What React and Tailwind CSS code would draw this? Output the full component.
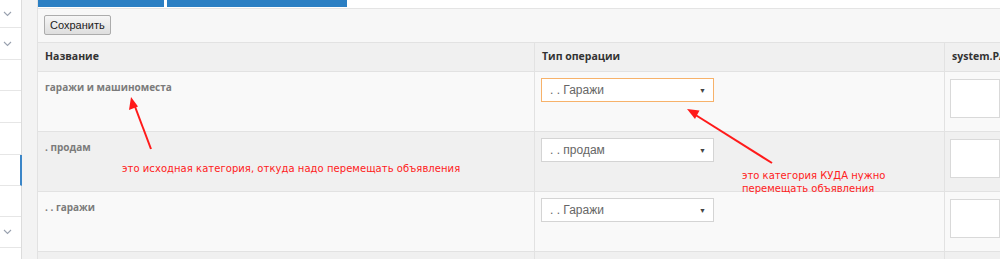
import React from 'react';

const Chevron = () => (
    <svg width="9" height="6" viewBox="0 0 9 6" className="text-gray-400">
        <path d="M1 1l3.5 3.5L8 1" fill="none" stroke="currentColor" strokeWidth="1.1" />
    </svg>
);

const sideItems = [
    { h: 'h-[28px]', chevron: true },
    { h: 'h-[32px]', chevron: true },
    { h: 'h-[31px]' },
    { h: 'h-[32px]' },
    { h: 'h-[32px]' },
    { h: 'h-[31px]', active: true },
    { h: 'h-[31px]' },
    { h: 'h-[31px]', chevron: true },
    { h: 'h-[31px]' },
];

const rows = [
    { name: 'гаражи и машиноместа', value: '. . Гаражи', focused: true, bg: 'bg-[#f9f9f9]' },
    { name: '. продам', value: '. . продам', bg: 'bg-[#f0f0f0]' },
    { name: '. . гаражи', value: '. . Гаражи', bg: 'bg-[#f9f9f9]' },
];

const FakeSelect = ({ value, focused }) => (
    <div
        className={`w-[173px] h-[24px] flex items-center justify-between pl-[8px] pr-[7px] bg-white border ${
            focused ? 'border-[#f7b26a]' : 'border-[#d4d4d4]'
        }`}
    >
        <span className="text-[12px] text-[#666]" style={{ fontFamily: '"Liberation Sans", Arial, sans-serif' }}>
            {value}
        </span>
        <span className="text-[7px] text-[#444] leading-none">▼</span>
    </div>
);

export default function App() {
    return (
        <div className="relative flex h-[259px] w-[1000px] overflow-hidden bg-[#f3f3f3]" style={{ fontFamily: '"Open Sans", sans-serif' }}>
            {/* sidebar */}
            <aside className="w-[22px] shrink-0 bg-white border-r border-[#dcdcdc] flex flex-col">
                {sideItems.map((item, i) => (
                    <div
                        key={i}
                        className={`${item.h} shrink-0 border-b border-[#e6e6e6] flex items-center pl-[3px] ${
                            item.active ? 'border-r-2 border-r-[#3b86c8] -mr-px' : ''
                        }`}
                    >
                        {item.chevron && <Chevron />}
                    </div>
                ))}
            </aside>

            <div className="w-[15px] shrink-0" />

            {/* main panel */}
            <main className="flex-1 flex flex-col bg-[#f7f7f7] border-l border-[#e2e2e2]">
                <div className="h-[9px] shrink-0 bg-white flex gap-[3px] border-b border-[#e4e4e4]">
                    <div className="w-[126px] h-[7px] bg-[#2b7fc3]" />
                    <div className="w-[180px] h-[7px] bg-[#2b7fc3]" />
                </div>

                <div className="h-[33px] shrink-0 px-[6px] pt-[6px] flex items-start">
                    <button
                        className="h-[20px] px-[5px] text-[11px] text-[#222] border border-[#acacac] rounded-[2px] bg-gradient-to-b from-[#f6f6f6] to-[#dedede] leading-none"
                        style={{ fontFamily: '"Liberation Sans", Arial, sans-serif' }}
                    >
                        Сохранить
                    </button>
                </div>

                <div className="grid grid-cols-[496px_410px_1fr] border-t border-[#e2e2e2]">
                    {['Название', 'Тип операции', 'system.PARAMS'].map((h, i) => (
                        <div
                            key={h}
                            className={`h-[29px] flex items-center px-[7px] bg-[#f0f0f0] border-b border-[#e2e2e2] text-[10.5px] font-bold text-[#333] whitespace-nowrap overflow-hidden ${
                                i > 0 ? 'border-l' : ''
                            }`}
                        >
                            {h}
                        </div>
                    ))}

                    {rows.map((r, idx) => (
                        <React.Fragment key={idx}>
                            <div className={`h-[60px] px-[7px] pt-[8px] border-b border-[#e2e2e2] ${r.bg}`}>
                                <span className="block text-[10px] leading-[14px] font-bold text-[#7b7b7b]">{r.name}</span>
                            </div>
                            <div className={`h-[60px] px-[6px] pt-[6px] border-b border-l border-[#e2e2e2] ${r.bg}`}>
                                <FakeSelect value={r.value} focused={r.focused} />
                            </div>
                            <div className={`h-[60px] pl-[5px] pt-[7px] border-b border-l border-[#e2e2e2] ${r.bg}`}>
                                <div className="h-[39px] bg-white border border-[#d9d9d9]" />
                            </div>
                        </React.Fragment>
                    ))}
                    <div className="h-[10px] bg-[#f0f0f0]" />
                    <div className="h-[10px] bg-[#f0f0f0] border-l border-[#e2e2e2]" />
                    <div className="h-[10px] bg-[#f0f0f0] border-l border-[#e2e2e2]" />
                </div>
            </main>

            {/* annotations */}
            <svg className="absolute inset-0 pointer-events-none" width="1000" height="259">
                <line x1="151" y1="149" x2="134" y2="104" stroke="#ff1a1a" strokeWidth="2" />
                <path d="M131 97l-2 13 9-3.5z" fill="#ff1a1a" />
                <line x1="772" y1="163" x2="694" y2="114" stroke="#ff1a1a" strokeWidth="2" />
                <path d="M687 109l8 10 4.5-8.5z" fill="#ff1a1a" />
            </svg>
            <div
                className="absolute left-[122px] top-[162px] text-[10px] text-[#ff2020] leading-[13px] whitespace-nowrap tracking-[0.05px]"
                style={{ fontFamily: '"DejaVu Sans", sans-serif' }}
            >
                это исходная категория, откуда надо перемещать объявления
            </div>
            <div
                className="absolute left-[742px] top-[169px] text-[10px] text-[#ff2020] leading-[13px] whitespace-nowrap"
                style={{ fontFamily: '"DejaVu Sans", sans-serif' }}
            >
                это категория КУДА нужно
                <br />
                перемещать объявления
            </div>
        </div>
    );
}
